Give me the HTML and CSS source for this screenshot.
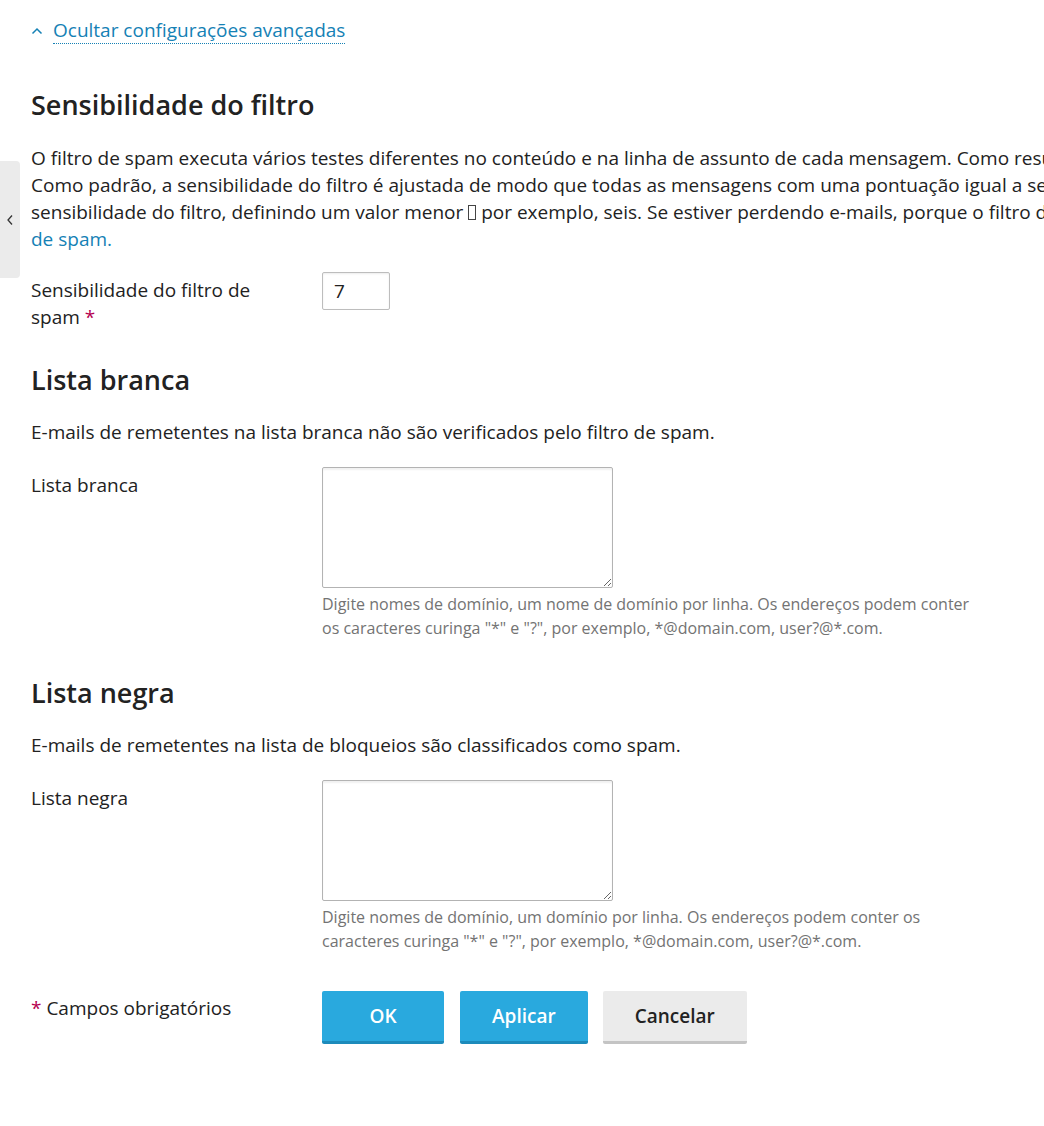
FILE: index.html
```html
<!DOCTYPE html>
<html lang="pt">
<head>
<meta charset="utf-8">
<title>Filtro de spam</title>
<link rel="stylesheet" href="styles.css">
</head>
<body>
<div class="side-tab">
  <svg class="side-chev" width="8" height="12" viewBox="0 0 8 12"><polyline points="6,1.5 2,6 6,10.5" fill="none" stroke="#333" stroke-width="1.3"/></svg>
</div>
<main class="page">
  <div class="toggle">
    <svg class="toggle-chev" width="12" height="8" viewBox="0 0 12 8"><polyline points="1.5,6.5 6,2 10.5,6.5" fill="none" stroke="#1581b5" stroke-width="1.5"/></svg>
    <a class="toggle-link" href="#">Ocultar configurações avançadas</a>
  </div>

  <section class="section first">
    <h2 class="title">Sensibilidade do filtro</h2>
    <p class="desc wide">O filtro de spam executa vários testes diferentes no conteúdo e na linha de assunto de cada mensagem. Como resultado, cada mensagem recebe uma pontuação.<br>Como padrão, a sensibilidade do filtro é ajustada de modo que todas as mensagens com uma pontuação igual a sete ou mais sejam classificadas como spam. Se você recebe<br>sensibilidade do filtro, definindo um valor menor <span class="tofu"></span> por exemplo, seis. Se estiver perdendo e-mails, porque o filtro de spam os considera spam, tente reduzir a<br><a class="link" href="#">de spam.</a></p>
    <div class="row">
      <label class="label">Sensibilidade do filtro de spam <span class="req">*</span></label>
      <div class="field"><input class="input-num" type="text" value="7"></div>
    </div>
  </section>

  <section class="section">
    <h2 class="title">Lista branca</h2>
    <p class="desc">E-mails de remetentes na lista branca não são verificados pelo filtro de spam.</p>
    <div class="row">
      <label class="label">Lista branca</label>
      <div class="field">
        <textarea class="area"></textarea>
        <div class="help">Digite nomes de domínio, um nome de domínio por linha. Os endereços podem conter os caracteres curinga "*" e "?", por exemplo, *@domain.com, user?@*.com.</div>
      </div>
    </div>
  </section>

  <section class="section">
    <h2 class="title">Lista negra</h2>
    <p class="desc">E-mails de remetentes na lista de bloqueios são classificados como spam.</p>
    <div class="row">
      <label class="label">Lista negra</label>
      <div class="field">
        <textarea class="area"></textarea>
        <div class="help">Digite nomes de domínio, um domínio por linha. Os endereços podem conter os caracteres curinga "*" e "?", por exemplo, *@domain.com, user?@*.com.</div>
      </div>
    </div>
  </section>

  <div class="row footer">
    <div class="label"><span class="req">*</span> Campos obrigatórios</div>
    <div class="buttons">
      <button class="btn btn-primary btn-ok">OK</button>
      <button class="btn btn-primary">Aplicar</button>
      <button class="btn btn-default">Cancelar</button>
    </div>
  </div>
</main>
</body>
</html>
```

FILE: styles.css
```css
html, body {
  margin: 0;
  padding: 0;
  background: #fff;
  overflow: hidden;
}
body {
  font-family: "Open Sans", "Liberation Sans", sans-serif;
  font-size: 19px;
  line-height: 27px;
  color: #222;
  position: relative;
  width: 1044px;
  height: 1126px;
}
.side-tab {
  position: absolute;
  left: 0;
  top: 161px;
  width: 20px;
  height: 117px;
  background: #ebebeb;
  border-radius: 0 4px 4px 0;
  display: flex;
  align-items: center;
  justify-content: center;
}
.page {
  padding: 16px 0 0 31px;
  width: 1400px;
}
.toggle {
  display: flex;
  align-items: center;
  gap: 10px;
  height: 28px;
}
.toggle-chev { margin-top: 1px; }
.toggle-link {
  color: #1581b5;
  text-decoration: none;
  font-size: 19px;
  border-bottom: 1px dotted #1581b5;
  line-height: 26px;
}
.title {
  font-size: 27px;
  font-weight: 600;
  line-height: 36px;
  margin: 31px 0 21px;
}
.first .title { margin-top: 43px; margin-bottom: 22px; }
.desc {
  margin: 0 0 21px;
}
.first .desc { margin-bottom: 19px; }
.wide { white-space: nowrap; }
.tofu {
  display: inline-block;
  width: 8px;
  height: 15px;
  border: 1px solid #444;
  box-sizing: border-box;
  vertical-align: -1px;
}
.link { color: #1581b5; text-decoration: none; }
.row {
  display: flex;
  align-items: flex-start;
}
.label {
  width: 256px;
  padding-right: 35px;
  padding-top: 5px;
  flex: none;
}
.req { color: #b5004f; }
.field { flex: none; }
.input-num {
  display: block;
  width: 68px;
  height: 38px;
  box-sizing: border-box;
  border: 1px solid #bdbdbd;
  border-radius: 2px;
  box-shadow: inset 0 1px 2px rgba(0,0,0,0.08);
  font-family: inherit;
  font-size: 19px;
  padding: 0 11px;
  color: #222;
}
.area {
  display: block;
  width: 291px;
  height: 121px;
  box-sizing: border-box;
  border: 1px solid #b3b3b3;
  border-radius: 2px;
  box-shadow: inset 0 2px 2px rgba(0,0,0,0.06);
  font-family: inherit;
  font-size: 16px;
}
.help {
  width: 665px;
  font-size: 16px;
  line-height: 24px;
  color: #737373;
  margin-top: 4px;
  margin-bottom: 4px;
}
.footer {
  margin-top: 34px;
}
.footer .label { padding-top: 4px; }
.buttons {
  display: flex;
  gap: 16px;
}
.btn {
  font-family: inherit;
  font-size: 19px;
  font-weight: 600;
  height: 53px;
  padding: 0 32px;
  border: none;
  border-radius: 2px;
  box-sizing: border-box;
}
.btn-primary {
  background: #29a9de;
  color: #fff;
  border-bottom: 3px solid #1d8bbb;
}
.btn-ok { min-width: 122px; }
.btn-default {
  background: #ebebeb;
  color: #222;
  border-bottom: 3px solid #c4c4c4;
  margin-left: -1px;
}
```
